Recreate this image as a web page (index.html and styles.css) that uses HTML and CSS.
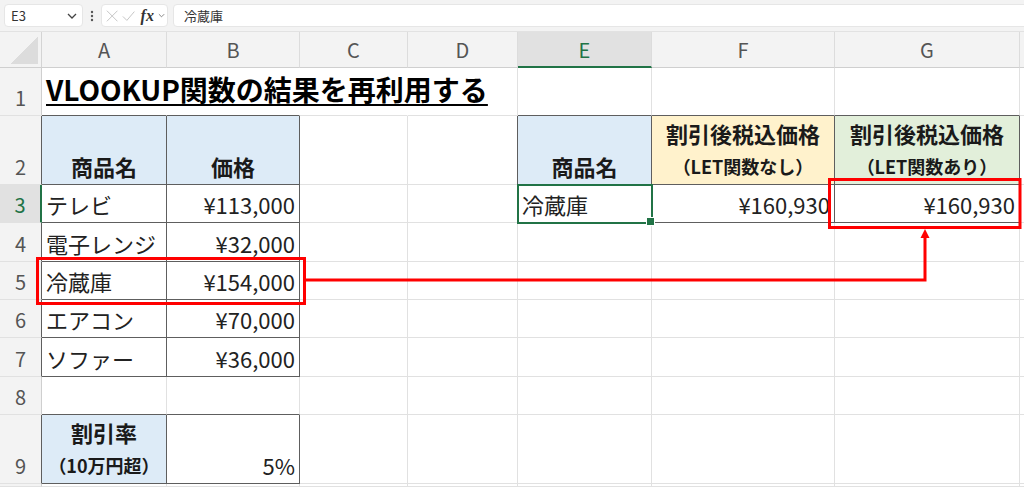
FILE: index.html
```html
<!DOCTYPE html>
<html lang="ja">
<head>
  <meta charset="UTF-8" />
  <title>VLOOKUP関数の結果を再利用する</title>
  <link rel="stylesheet" href="styles.css">
</head>
<body>
  <div class="screen">
    <div class="fbar">
      <div class="namebox">
        <span>E3</span>
        <svg width="10" height="6" viewBox="0 0 10 6"><path d="M1 1l4 4 4-4" fill="none" stroke="#444" stroke-width="1.3"/></svg>
      </div>
      <div class="vdots">
        <svg width="4" height="12" viewBox="0 0 4 12"><circle cx="2" cy="2" r="1.2" fill="#555"/><circle cx="2" cy="6" r="1.2" fill="#555"/><circle cx="2" cy="10" r="1.2" fill="#555"/></svg>
      </div>
      <div class="fxbox">
        <svg width="14" height="14" viewBox="0 0 14 14"><path d="M1 1l12 12M13 1L1 13" stroke="#c4c4c4" stroke-width="1.1" fill="none"/></svg>
        <svg width="15" height="14" viewBox="0 0 15 14"><path d="M1 7.5l4.5 4.5 8.5-10" stroke="#c4c4c4" stroke-width="1.1" fill="none"/></svg>
        <span class="fx">fx</span>
        <svg width="8" height="5" viewBox="0 0 8 5"><path d="M1 1l3 3 3-3" fill="none" stroke="#777" stroke-width="1"/></svg>
      </div>
      <div class="formula">冷蔵庫</div>
    </div>

    <div class="sheet">
      <div class="corner"></div>
      <div class="ch">A</div><div class="ch">B</div><div class="ch">C</div><div class="ch">D</div>
      <div class="ch sel">E</div><div class="ch">F</div><div class="ch">G</div><div class="ch end"></div>

      <div class="rh">1</div>
      <div class="c nr db title">VLOOKUP関数の結果を再利用する</div>
      <div class="c nr db"></div><div class="c nr"></div><div class="c"></div>
      <div class="c db"></div><div class="c db"></div><div class="c db"></div><div class="c end"></div>

      <div class="rh dr">2</div>
      <div class="c dr db blue head">商品名</div>
      <div class="c dr db blue head">価格</div>
      <div class="c"></div><div class="c dr"></div>
      <div class="c dr db blue head">商品名</div>
      <div class="c dr db yellow head">割引後税込価格<small>（LET関数なし）</small></div>
      <div class="c dr db green head">割引後税込価格<small>（LET関数あり）</small></div>
      <div class="c end"></div>

      <div class="rh sel">3</div>
      <div class="c dr db">テレビ</div>
      <div class="c dr db num">¥113,000</div>
      <div class="c"></div><div class="c dr"></div>
      <div class="c dr db active">冷蔵庫</div>
      <div class="c dr db num">¥160,930</div>
      <div class="c dr db num">¥160,930</div>
      <div class="c end"></div>

      <div class="rh dr">4</div>
      <div class="c dr db">電子レンジ</div>
      <div class="c dr db num">¥32,000</div>
      <div class="c"></div><div class="c"></div><div class="c"></div><div class="c"></div><div class="c"></div><div class="c end"></div>

      <div class="rh dr">5</div>
      <div class="c dr db">冷蔵庫</div>
      <div class="c dr db num">¥154,000</div>
      <div class="c"></div><div class="c"></div><div class="c"></div><div class="c"></div><div class="c"></div><div class="c end"></div>

      <div class="rh dr">6</div>
      <div class="c dr db">エアコン</div>
      <div class="c dr db num">¥70,000</div>
      <div class="c"></div><div class="c"></div><div class="c"></div><div class="c"></div><div class="c"></div><div class="c end"></div>

      <div class="rh dr">7</div>
      <div class="c dr db">ソファー</div>
      <div class="c dr db num">¥36,000</div>
      <div class="c"></div><div class="c"></div><div class="c"></div><div class="c"></div><div class="c"></div><div class="c end"></div>

      <div class="rh">8</div>
      <div class="c db"></div><div class="c db"></div>
      <div class="c"></div><div class="c"></div><div class="c"></div><div class="c"></div><div class="c"></div><div class="c end"></div>

      <div class="rh dr">9</div>
      <div class="c dr db blue head">割引率<small>（10万円超）</small></div>
      <div class="c dr db num">5%</div>
      <div class="c"></div><div class="c"></div><div class="c"></div><div class="c"></div><div class="c"></div><div class="c end"></div>

      <div class="rh"></div>
      <div class="c"></div><div class="c"></div><div class="c"></div><div class="c"></div>
      <div class="c"></div><div class="c"></div><div class="c"></div><div class="c end"></div>
    </div>

    <svg class="marks" width="1024" height="487" viewBox="0 0 1024 487">
      <rect x="37.5" y="258.5" width="267" height="45" fill="none" stroke="#ff0000" stroke-width="3"/>
      <rect x="829.5" y="179.5" width="190.5" height="48" fill="none" stroke="#ff0000" stroke-width="3"/>
      <polyline points="306,280 925,280 925,236" fill="none" stroke="#ff0000" stroke-width="3"/>
      <polygon points="925,229 920.5,238 929.5,238" fill="#ff0000"/>
    </svg>
  </div>
</body>
</html>
```

FILE: styles.css
```css
* { box-sizing: border-box; }
body {
  margin: 0;
  font-family: "Noto Sans CJK JP", "Noto Sans", sans-serif;
  background: #fff;
  color: #222;
}
.screen {
  position: relative;
  width: 1024px;
  height: 487px;
  overflow: hidden;
}

/* formula bar */
.fbar {
  height: 32px;
  background: #f3f3f3;
  border-bottom: 1px solid #e2e2e2;
  display: flex;
  align-items: center;
  padding-left: 4px;
}
.namebox,
.fxbox,
.formula {
  height: 23px;
  background: #fff;
  border: 1px solid #e6e6e6;
  border-radius: 4px;
  display: flex;
  align-items: center;
  font-size: 13px;
  color: #333;
}
.namebox {
  width: 79px;
  justify-content: space-between;
  padding: 0 5px 0 6px;
}
.vdots {
  width: 18px;
  display: flex;
  justify-content: center;
}
.fxbox {
  width: 67px;
  padding: 0 2px 0 4px;
  gap: 4px;
}
.fx {
  font-family: "Liberation Serif", serif;
  font-style: italic;
  font-weight: bold;
  font-size: 16px;
  color: #333;
  margin-left: 1px;
}
.formula {
  flex: 1;
  margin-left: 5px;
  margin-right: -4px;
  padding-left: 10px;
}

/* grid */
.sheet {
  display: grid;
  grid-template-columns: 42px 125px 133px 108px 110px 134px 183px 185px 1fr;
  grid-template-rows: 36px 48px 69px 38px 39px 38px 38px 39px 38px 69px 1fr;
  height: 455px;
}
.corner {
  background: linear-gradient(to bottom right, transparent 50%, #dcdcdc 50%) no-repeat right 3px bottom 3px / 28px 28px, #f3f3f3;
  border-right: 1px solid #d4d4d4;
  border-bottom: 1px solid #cfcfcf;
}
.ch {
  background: #f3f3f3;
  border-right: 1px solid #dcdcdc;
  border-bottom: 1px solid #cfcfcf;
  display: flex;
  align-items: center;
  justify-content: center;
  font-size: 20px;
  color: #555;
}
.ch.sel {
  background: #e1e1e1;
  color: #217346;
  border-bottom: 2px solid #217346;
}
.ch.end { border-right: none; }
.rh {
  background: #f3f3f3;
  border-right: 1px solid #cfcfcf;
  border-bottom: 1px solid #e1e1e1;
  display: flex;
  align-items: flex-end;
  justify-content: center;
  font-size: 20px;
  line-height: 33px;
  padding-bottom: 1px;
  color: #555;
}
.rh.dr { border-right-color: #5e5e5e; }
.rh.sel {
  background: #e1e1e1;
  color: #217346;
  border-right: 2px solid #217346;
}

.c {
  border-right: 1px solid #e1e1e1;
  border-bottom: 1px solid #e1e1e1;
  display: flex;
  align-items: flex-end;
  padding: 0 4px 1px;
  font-size: 22px;
  line-height: 33px;
  white-space: nowrap;
}
.c.end { border-right: none; }
.dr { border-right-color: #5e5e5e; }
.db { border-bottom-color: #5e5e5e; }
.nr { border-right-color: transparent; }
.num { justify-content: flex-end; }
.blue { background: #ddebf7; }
.yellow { background: #fff2cc; }
.green { background: #e2efda; }
.head {
  flex-direction: column;
  justify-content: flex-end;
  align-items: center;
  font-weight: bold;
  color: #1a1a1a;
}
.head small {
  font-size: 18px;
}
.title {
  align-items: center;
  padding-bottom: 4px;
  font-size: 28px;
  font-weight: bold;
  color: #000;
  text-decoration: underline;
  text-decoration-thickness: 2px;
  text-underline-offset: 3px;
}
.active {
  position: relative;
  outline: 2px solid #217346;
  outline-offset: -1px;
  z-index: 1;
}
.active::after {
  content: "";
  position: absolute;
  right: -4px;
  bottom: -4px;
  width: 7px;
  height: 7px;
  background: #217346;
  border: 1px solid #fff;
}

.marks {
  position: absolute;
  top: 0;
  left: 0;
  pointer-events: none;
}
```
